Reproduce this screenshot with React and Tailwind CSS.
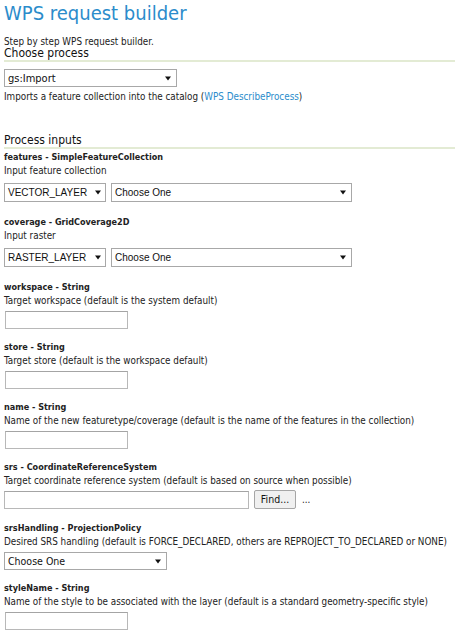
import React from "react";

const COND = { fontFamily: '"DejaVu Sans Condensed", "DejaVu Sans", sans-serif' };

function Arrow() {
  return (
    <svg width="6" height="5" viewBox="0 0 6 5" className="shrink-0">
      <path d="M0 0.5 H6 L3 4.5 Z" fill="#111" />
    </svg>
  );
}

function Select({ text, className, arial }) {
  return (
    <div
      className={`flex items-center justify-between border border-[#a8a8a8] bg-white pl-[3px] text-[#111] ${
        arial ? "font-['Liberation_Sans',Arial,sans-serif] text-[10px]" : ""
      } ${className}`}
    >
      <span className="leading-none">{text}</span>
      <Arrow />
    </div>
  );
}

function TextInput({ className }) {
  return <div className={`h-[18px] border border-[#b8b8b8] border-t-[#a4a4a4] bg-white ${className}`} />;
}

function Field({ label, desc, children, mt, ctrlMt }) {
  return (
    <div className={mt}>
      <div className="text-[9px] font-bold leading-[14px] text-[#222]">{label}</div>
      <div className="text-[9.8px] leading-[14px] text-[#222]">{desc}</div>
      <div className={ctrlMt}>{children}</div>
    </div>
  );
}

export default function App() {
  return (
    <div className="min-h-[633px] bg-white pl-1 text-[#222]" style={COND}>
      <h1 className="pt-[1px] text-[20px] font-normal leading-[24px] text-[#2b8ccb]">WPS request builder</h1>
      <div className="mt-[11px] text-[9.8px] leading-[11px]">Step by step WPS request builder.</div>
      <h2 className="border-b-2 border-[#e3ebd4] text-[12px] font-normal leading-[13px] text-[#111]">
        Choose process
      </h2>

      <Select text="gs:Import" className="mt-[7px] h-[18px] w-[173px] pr-[5px] text-[11px]" />
      <div className="mt-[3px] text-[9.8px] leading-[13px]">
        Imports a feature collection into the catalog (
        <span className="text-[#2b8ccb]">WPS DescribeProcess</span>)
      </div>

      <h2 className="mt-[31px] border-b-2 border-[#e3ebd4] text-[12px] font-normal leading-[13px] text-[#111]">
        Process inputs
      </h2>

      <Field mt="mt-[1px]" ctrlMt="mt-[5px]" label="features - SimpleFeatureCollection" desc="Input feature collection">
        <div className="flex gap-[5px]">
          <Select arial text="VECTOR_LAYER" className="h-[19px] w-[102px] pr-[4px]" />
          <Select arial text="Choose One" className="h-[19px] w-[241px] pr-[5px]" />
        </div>
      </Field>

      <Field mt="mt-[13px]" ctrlMt="mt-[5px]" label="coverage - GridCoverage2D" desc="Input raster">
        <div className="flex gap-[5px]">
          <Select arial text="RASTER_LAYER" className="h-[19px] w-[102px] pr-[4px]" />
          <Select arial text="Choose One" className="h-[19px] w-[241px] pr-[5px]" />
        </div>
      </Field>

      <Field
        mt="mt-[13px]"
        ctrlMt="mt-[3px]"
        label="workspace - String"
        desc="Target workspace (default is the system default)"
      >
        <TextInput className="ml-[1px] w-[123px]" />
      </Field>

      <Field
        mt="mt-[11px]"
        ctrlMt="mt-[3px]"
        label="store - String"
        desc="Target store (default is the workspace default)"
      >
        <TextInput className="ml-[1px] w-[123px]" />
      </Field>

      <Field
        mt="mt-[11px]"
        ctrlMt="mt-[3px]"
        label="name - String"
        desc="Name of the new featuretype/coverage (default is the name of the features in the collection)"
      >
        <TextInput className="ml-[1px] w-[123px]" />
      </Field>

      <Field
        mt="mt-[11px]"
        ctrlMt="mt-[2px]"
        label="srs - CoordinateReferenceSystem"
        desc="Target coordinate reference system (default is based on source when possible)"
      >
        <div className="flex items-center">
          <TextInput className="w-[245px]" />
          <button className="ml-[5px] h-[19px] w-[42px] rounded-[2px] border border-[#a6a6a6] bg-[#f0f0f0] text-[10.5px] leading-none text-[#111]">
            Find...
          </button>
          <span className="ml-[6px] text-[9.8px] leading-none">...</span>
        </div>
      </Field>

      <Field
        mt="mt-[12px]"
        ctrlMt="mt-[3px]"
        label="srsHandling - ProjectionPolicy"
        desc="Desired SRS handling (default is FORCE_DECLARED, others are REPROJECT_TO_DECLARED or NONE)"
      >
        <Select text="Choose One" className="h-[18px] w-[163px] pr-[5px] text-[10.5px]" />
      </Field>

      <Field
        mt="mt-[11px]"
        ctrlMt="mt-[3px]"
        label="styleName - String"
        desc="Name of the style to be associated with the layer (default is a standard geometry-specific style)"
      >
        <TextInput className="ml-[1px] w-[123px]" />
      </Field>
    </div>
  );
}
